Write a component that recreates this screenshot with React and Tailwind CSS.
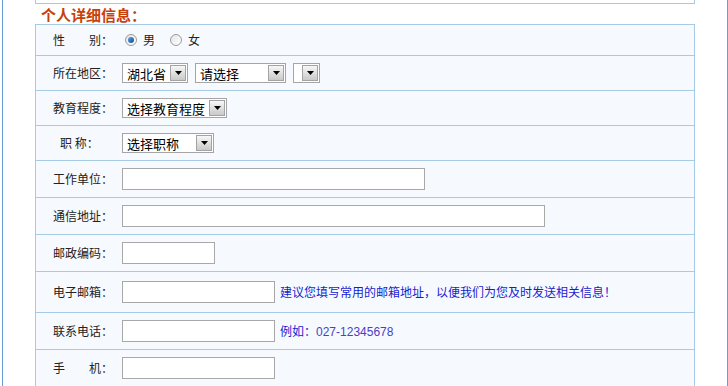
import React from "react";

const Arrow = () => (
  <span className="flex h-[16px] w-[16px] shrink-0 items-center justify-center border border-[#a3a3a3] bg-gradient-to-b from-[#f7f7f7] to-[#c9c9c9]">
    <svg width="7" height="4" viewBox="0 0 7 4">
      <path d="M0 0h7L3.5 4z" fill="#000" />
    </svg>
  </span>
);

const Select = ({ text, w }) => (
  <div className={`flex h-[20px] items-center justify-between border border-[#a5a5a5] bg-white pl-[4px] pr-[1px] text-[13px] text-black ${w}`}>
    <span className="leading-none">{text}</span>
    <Arrow />
  </div>
);

const Input = ({ w }) => (
  <div className={`h-[22px] border border-[#a8a8a8] bg-white ${w}`} />
);

const Radio = ({ on }) => (
  <span className="flex h-[12px] w-[12px] items-center justify-center rounded-full border border-[#9a9a9a] bg-gradient-to-br from-[#e4e4e4] to-white">
    {on && <span className="h-[6px] w-[6px] rounded-full bg-gradient-to-br from-[#5fa0e0] to-[#0a4c98]" />}
  </span>
);

// 每一行：标签 + 内容 + 行高
const rows = [
  {
    label: "性　　别：",
    h: "h-[30px]",
    pl: "pl-[17px]",
    body: (
      <div className="flex items-center pl-[3px]">
        <Radio on />
        <span className="ml-[6px]">男</span>
        <span className="ml-[15px]"><Radio /></span>
        <span className="ml-[6px]">女</span>
      </div>
    ),
  },
  {
    label: "所在地区：",
    h: "h-[34px]",
    pl: "pl-[17px]",
    body: (
      <div className="flex items-center gap-[7px]">
        <Select text="湖北省" w="w-[66px]" />
        <Select text="请选择" w="w-[91px]" />
        <Select text="" w="w-[27px]" />
      </div>
    ),
  },
  {
    label: "教育程度：",
    h: "h-[34px]",
    pl: "pl-[17px]",
    body: <Select text="选择教育程度" w="w-[105px]" />,
  },
  {
    label: "职 称：",
    h: "h-[34px]",
    pl: "pl-[24px]",
    body: <Select text="选择职称" w="w-[92px]" />,
  },
  { label: "工作单位：", h: "h-[36px]", pl: "pl-[17px]", body: <Input w="w-[303px]" /> },
  { label: "通信地址：", h: "h-[36px]", pl: "pl-[17px]", body: <Input w="w-[423px]" /> },
  { label: "邮政编码：", h: "h-[36px]", pl: "pl-[17px]", body: <Input w="w-[93px]" /> },
  {
    label: "电子邮箱：",
    h: "h-[40px]",
    pl: "pl-[17px]",
    body: (
      <div className="flex items-center">
        <Input w="w-[153px]" />
        <span className="ml-[5px] text-[#1a1ad0]">建议您填写常用的邮箱地址，以便我们为您及时发送相关信息！</span>
      </div>
    ),
  },
  {
    label: "联系电话：",
    h: "h-[36px]",
    pl: "pl-[17px]",
    body: (
      <div className="flex items-center">
        <Input w="w-[153px]" />
        <span className="ml-[5px] text-[#1a1ad0]">
          例如：<span className="font-['Liberation_Sans',sans-serif] text-[#4a40c8]">027-12345678</span>
        </span>
      </div>
    ),
  },
  { label: "手　　机：", h: "h-[36px]", pl: "pl-[17px]", body: <Input w="w-[153px]" /> },
];

export default function App() {
  return (
    <div className="h-[386px] w-[728px] overflow-hidden bg-white font-['Noto_Sans_CJK_SC',sans-serif] text-[12px] text-[#222]">
      <div className="ml-[2px] h-full w-[726px] border-x border-[#6b9bd2] px-[32px]">
        {/* 上一块的底边 */}
        <div className="h-[4px] border-x border-b border-[#a7cbe5] bg-white" />

        <div className="flex h-[20px] items-center pl-[6px] text-[15px] font-bold leading-none text-[#c8400a]">
          个人详细信息：
        </div>

        <div className="border-x border-t border-[#a7cbe5] bg-[#f6faff]">
          {rows.map((r, i) => (
            <div key={i} className={`box-content flex items-center border-b border-[#a7cbe5] ${r.h}`}>
              <div className={`w-[86px] shrink-0 whitespace-pre ${r.pl}`}>{r.label}</div>
              <div className="flex items-center">{r.body}</div>
            </div>
          ))}
        </div>
      </div>
    </div>
  );
}
